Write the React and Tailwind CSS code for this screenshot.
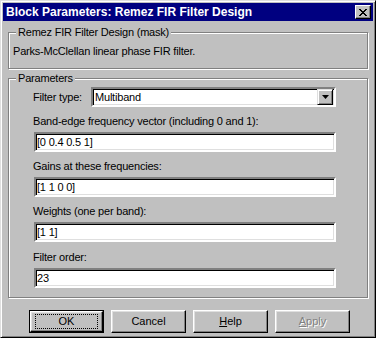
import React from 'react';

const font = { fontFamily: '"Liberation Sans", Arial, sans-serif' };

function GroupBox({ title, className = '', children }) {
    return (
        <div className={`relative border border-[#808080] shadow-[inset_1px_1px_0_#fff,1px_1px_0_#fff] ${className}`}>
            <span className="absolute left-[7px] -top-[8px] bg-[#c0c0c0] px-[2px] text-[11px] leading-[14px] tracking-[-0.2px] text-black">
                {title}
            </span>
            {children}
        </div>
    );
}

function Field({ value }) {
    return (
        <div className="h-[20px] w-[302px] border-2 border-t-[#808080] border-l-[#808080] border-b-white border-r-white bg-white shadow-[inset_1px_1px_0_#000,inset_-1px_-1px_0_#dfdfdf] flex items-center pl-[1px] text-[11px] text-black">
            {value}
        </div>
    );
}

function Button({ children, isDefault, disabled }) {
    return (
        <div className={`h-[23px] w-[75px] flex items-center justify-center text-[11px] bg-[#c0c0c0] ${isDefault ? 'border border-black' : ''}`}>
            <div className="h-full w-full border border-t-white border-l-white border-b-black border-r-black shadow-[inset_-1px_-1px_0_#808080,inset_1px_1px_0_#dfdfdf] flex items-center justify-center">
                {isDefault ? (
                    <div className="h-[15px] w-[63px] border border-dotted border-black flex items-center justify-center">{children}</div>
                ) : disabled ? (
                    <span className="text-[#808080] [text-shadow:1px_1px_0_#fff]">{children}</span>
                ) : (
                    <span>{children}</span>
                )}
            </div>
        </div>
    );
}

export default function App() {
    return (
        <div style={font} className="w-[376px] h-[338px] bg-[#c0c0c0] border border-t-[#dfdfdf] border-l-[#dfdfdf] border-b-black border-r-black shadow-[inset_1px_1px_0_#fff,inset_-1px_-1px_0_#808080] p-[2px] flex flex-col text-black select-none">
            {/* title bar */}
            <div className="h-[18px] bg-[#000080] flex items-center justify-between pl-[3px] pr-[2px]">
                <span className="text-white font-bold text-[12px]">Block Parameters: Remez FIR Filter Design</span>
                <div className="h-[14px] w-[16px] bg-[#c0c0c0] border border-t-white border-l-white border-b-black border-r-black shadow-[inset_-1px_-1px_0_#808080] flex items-center justify-center">
                    <svg width="8" height="7" viewBox="0 0 8 7">
                        <path d="M0 0h2v1h1v1h2v-1h1v-1h2v1h-1v1h-1v1h-1v1h1v1h1v1h1v1h-2v-1h-1v-1h-2v1h-1v1h-2v-1h1v-1h1v-1h1v-1h-1v-1h-1v-1h-1z" fill="#000" />
                    </svg>
                </div>
            </div>

            <GroupBox title="Remez FIR Filter Design (mask)" className="mx-[5px] mt-[11px] h-[37px]">
                <div className="pl-[4px] pt-[11px] text-[11px] leading-[14px] tracking-[-0.2px]">Parks-McClellan linear phase FIR filter.</div>
            </GroupBox>

            <GroupBox title="Parameters" className="mx-[5px] mt-[9px] h-[220px]">
                <div className="pl-[24px] pt-[8px] flex flex-col text-[11px] tracking-[-0.2px]">
                    <div className="flex items-center h-[20px]">
                        <span className="w-[58px]">Filter type:</span>
                        <div className="h-[20px] w-[245px] border-2 border-t-[#808080] border-l-[#808080] border-b-white border-r-white bg-white shadow-[inset_1px_1px_0_#000,inset_-1px_-1px_0_#dfdfdf] flex items-center justify-between pl-[2px] pr-[1px]">
                            <span>Multiband</span>
                            <div className="h-[16px] w-[16px] bg-[#c0c0c0] border border-t-[#dfdfdf] border-l-[#dfdfdf] border-b-black border-r-black shadow-[inset_1px_1px_0_#fff,inset_-1px_-1px_0_#808080] flex items-center justify-center">
                                <svg width="7" height="4" viewBox="0 0 7 4"><path d="M0 0h7L3.5 4z" fill="#000" /></svg>
                            </div>
                        </div>
                    </div>

                    <div className="mt-[7px] leading-[14px]">Band-edge frequency vector (including 0 and 1):</div>
                    <div className="mt-[4px] pl-[1px]"><Field value="[0 0.4 0.5 1]" /></div>

                    <div className="mt-[7px] leading-[14px]">Gains at these frequencies:</div>
                    <div className="mt-[4px] pl-[1px]"><Field value="[1 1 0 0]" /></div>

                    <div className="mt-[7px] leading-[14px]">Weights (one per band):</div>
                    <div className="mt-[4px] pl-[1px]"><Field value="[1 1]" /></div>

                    <div className="mt-[8px] leading-[14px]">Filter order:</div>
                    <div className="mt-[4px] pl-[1px]"><Field value="23" /></div>
                </div>
            </GroupBox>

            <div className="mt-[12px] flex gap-[7px] pl-[26px]">
                <Button isDefault>OK</Button>
                <Button>Cancel</Button>
                <Button><span className="underline underline-offset-[1px]">H</span>elp</Button>
                <Button disabled><span className="underline underline-offset-[1px]">A</span>pply</Button>
            </div>
        </div>
    );
}
